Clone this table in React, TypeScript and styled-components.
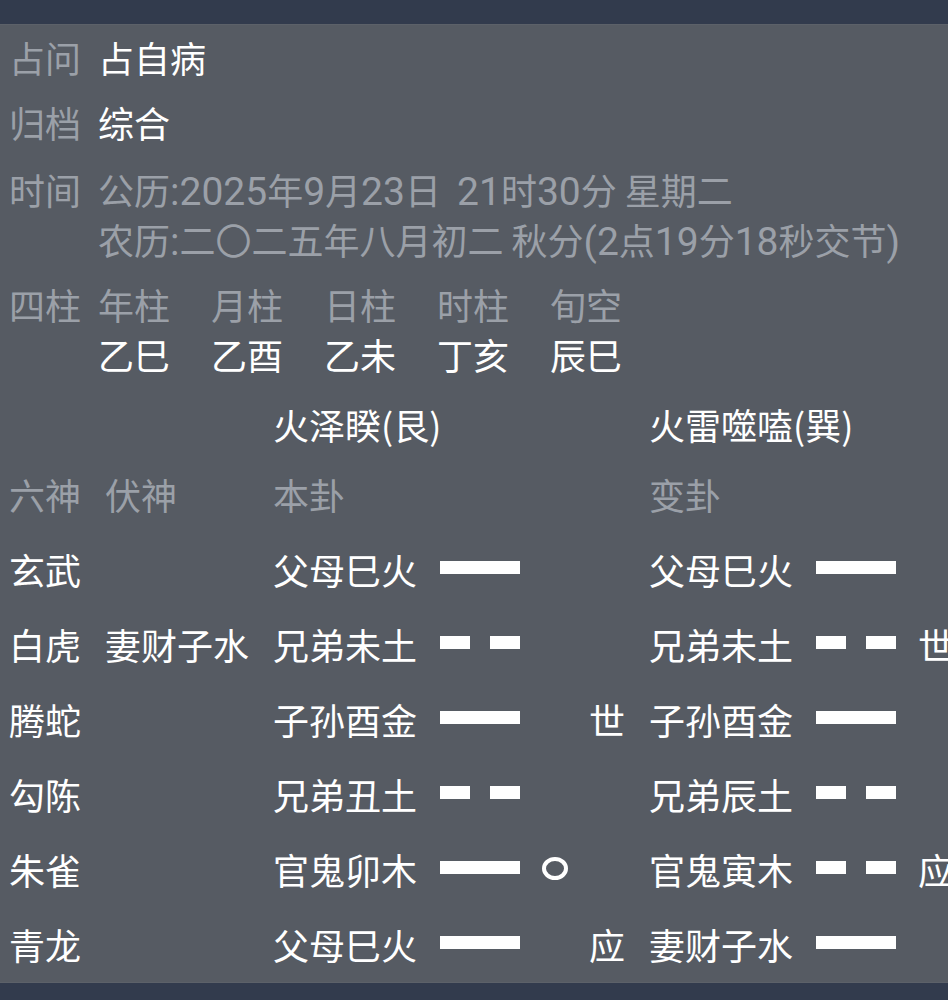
import React from 'react';
import styled, { createGlobalStyle } from 'styled-components';

const GlobalStyle = createGlobalStyle`
  html, body {
    margin: 0;
    padding: 0;
    background: #565b63;
  }
  body {
    font-family: "Noto Sans CJK SC", "Noto Sans", sans-serif;
  }
`;

type Yao = {
  god: string;
  fu?: string;
  ben: string;
  benYang: boolean;
  moving?: boolean;
  benMark?: string;
  bian: string;
  bianYang: boolean;
  bianMark?: string;
};

const yaoRows: Yao[] = [
  { god: '玄武', ben: '父母巳火', benYang: true, bian: '父母巳火', bianYang: true },
  { god: '白虎', fu: '妻财子水', ben: '兄弟未土', benYang: false, bian: '兄弟未土', bianYang: false, bianMark: '世' },
  { god: '腾蛇', ben: '子孙酉金', benYang: true, benMark: '世', bian: '子孙酉金', bianYang: true },
  { god: '勾陈', ben: '兄弟丑土', benYang: false, bian: '兄弟辰土', bianYang: false },
  { god: '朱雀', ben: '官鬼卯木', benYang: true, moving: true, bian: '官鬼寅木', bianYang: false, bianMark: '应' },
  { god: '青龙', ben: '父母巳火', benYang: true, benMark: '应', bian: '妻财子水', bianYang: true },
];

const pillars = [
  ['年柱', '乙巳'],
  ['月柱', '乙酉'],
  ['日柱', '乙未'],
  ['时柱', '丁亥'],
  ['旬空', '辰巳'],
];

const YaoLine: React.FC<{ yang: boolean }> = ({ yang }) => (
  <LineBox>
    {yang ? <Bar $w={80} /> : (
      <>
        <Bar $w={30} />
        <Bar $w={30} />
      </>
    )}
  </LineBox>
);

const App: React.FC = () => {
  return (
    <Screen>
      <GlobalStyle />
      <TopBar />
      <Body>
        <InfoRow $mt={7}>
          <Label>占问</Label>
          <Value>占自病</Value>
        </InfoRow>
        <InfoRow $mt={15}>
          <Label>归档</Label>
          <Value>综合</Value>
        </InfoRow>
        <InfoRow $mt={17}>
          <Label>时间</Label>
          <Lines>
            <DateLine>
              公历<Num>:2025</Num>年<Num>9</Num>月<Num>23</Num>日&nbsp;&nbsp;<Num>21</Num>时<Num>30</Num>分 星期二
            </DateLine>
            <DateLine>
              农历<Num>:</Num>二〇二五年八月初二 秋分<Num>(2</Num>点<Num>19</Num>分<Num>18</Num>秒交节<Num>)</Num>
            </DateLine>
          </Lines>
        </InfoRow>
        <InfoRow $mt={15}>
          <Label>四柱</Label>
          <PillarGrid>
            {pillars.map(([h]) => (
              <Label key={h}>{h}</Label>
            ))}
            {pillars.map(([h, v]) => (
              <Value key={h + v}>{v}</Value>
            ))}
          </PillarGrid>
        </InfoRow>

        <GuaRow $mt={20}>
          <GuaName $col="3 / 6">火泽睽(艮)</GuaName>
          <GuaName $col="7 / 10">火雷噬嗑(巽)</GuaName>
        </GuaRow>
        <GuaRow $mt={20}>
          <Label>六神</Label>
          <Label>伏神</Label>
          <Label>本卦</Label>
          <span />
          <span />
          <span />
          <Label>变卦</Label>
        </GuaRow>
        {yaoRows.map((y, i) => (
          <GuaRow key={i} $mt={25}>
            <Value>{y.god}</Value>
            <Value>{y.fu ?? ''}</Value>
            <Value>{y.ben}</Value>
            <YaoLine yang={y.benYang} />
            <MoveCell>{y.moving && <MoveMark />}</MoveCell>
            <Mark>{y.benMark ?? ''}</Mark>
            <Value>{y.bian}</Value>
            <YaoLine yang={y.bianYang} />
            <TailMark>{y.bianMark ?? ''}</TailMark>
          </GuaRow>
        ))}
      </Body>
      <BottomBar />
    </Screen>
  );
};

const Screen = styled.div`
  width: 948px;
  height: 1000px;
  display: flex;
  flex-direction: column;
  overflow: hidden;
  background: #565b63;
`;

const TopBar = styled.div`
  height: 25px;
  flex-shrink: 0;
  background: #323b4d;
  border-bottom: 1px solid #5c6169;
  box-sizing: border-box;
`;

const BottomBar = styled.div`
  height: 18px;
  flex-shrink: 0;
  background: #323b4d;
  border-top: 1px solid #5c6169;
  box-sizing: border-box;
`;

const Body = styled.div`
  flex: 1;
  display: flex;
  flex-direction: column;
  padding-left: 9px;
  font-size: 36px;
  line-height: 50px;
  white-space: nowrap;
  overflow: hidden;
`;

const InfoRow = styled.div<{ $mt: number }>`
  display: grid;
  grid-template-columns: 89px auto;
  margin-top: ${(p) => p.$mt}px;
`;

const Label = styled.span`
  color: #9ba0a8;
`;

const Value = styled.span`
  color: #ffffff;
`;

const Lines = styled.div`
  display: flex;
  flex-direction: column;
`;

const DateLine = styled.div`
  height: 50px;
  color: #9ba0a8;
`;

const Num = styled.span`
  font-family: Roboto, "Noto Sans CJK SC", sans-serif;
  font-size: 39px;
  line-height: 1;
`;

const PillarGrid = styled.div`
  display: grid;
  grid-template-columns: repeat(5, 113px);
`;

const GuaRow = styled.div<{ $mt: number }>`
  display: grid;
  grid-template-columns: 96px 168px 167px 80px 69px 60px 167px 80px auto;
  align-items: center;
  height: 50px;
  margin-top: ${(p) => p.$mt}px;
`;

const GuaName = styled.span<{ $col: string }>`
  grid-column: ${(p) => p.$col};
  color: #ffffff;
`;

const LineBox = styled.div`
  display: flex;
  justify-content: space-between;
  width: 80px;
  height: 13px;
  margin-top: -4px;
`;

const Bar = styled.div<{ $w: number }>`
  width: ${(p) => p.$w}px;
  height: 13px;
  background: #ffffff;
`;

const MoveCell = styled.div`
  display: flex;
  align-items: center;
  padding-left: 22px;
`;

const MoveMark = styled.div`
  width: 18px;
  height: 15px;
  border: 4px solid #ffffff;
  border-radius: 50%;
  margin-top: -2px;
`;

const Mark = styled.span`
  color: #ffffff;
`;

const TailMark = styled.span`
  color: #ffffff;
  padding-left: 22px;
`;

export default App;
